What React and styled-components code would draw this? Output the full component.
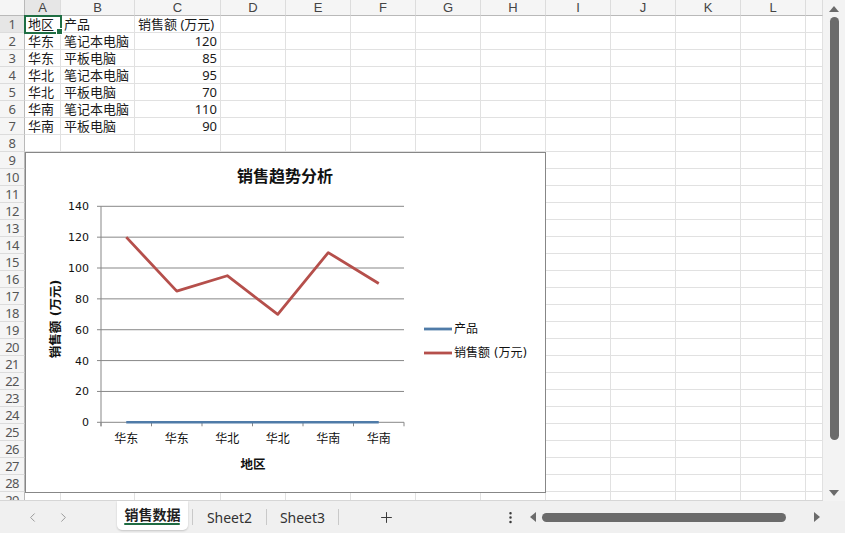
import React from "react";
import styled, { createGlobalStyle } from "styled-components";
import { ChevronLeft, ChevronRight, Plus, EllipsisVertical } from "lucide-react";

const Global = createGlobalStyle`
  html, body { margin: 0; padding: 0; background: #fff; }
  body { width: 845px; height: 533px; overflow: hidden; font-family: "Noto Sans", "Noto Sans CJK SC", sans-serif; }
`;

const COLS = ["A", "B", "C", "D", "E", "F", "G", "H", "I", "J", "K", "L", ""];
const DATA = [
  ["地区", "产品", "销售额 (万元)"],
  ["华东", "笔记本电脑", 120],
  ["华东", "平板电脑", 85],
  ["华北", "笔记本电脑", 95],
  ["华北", "平板电脑", 70],
  ["华南", "笔记本电脑", 110],
  ["华南", "平板电脑", 90],
];

const Page = styled.div`
  width: 845px;
  height: 533px;
  display: flex;
  flex-direction: column;
  background: #f3f3f3;
`;

const Top = styled.div`
  display: flex;
  height: 501px;
`;

const Sheet = styled.div`
  position: relative;
  width: 823px;
  height: 501px;
  overflow: hidden;
  background: #fff;
  border-bottom: 1px solid #d6d6d6;
  box-sizing: border-box;
`;

const Grid = styled.div`
  display: grid;
  grid-template-columns: 25px 36px 74px 86px repeat(9, 65px) 17px;
  grid-template-rows: 16px repeat(29, 17px);
`;

const ColHead = styled.div`
  box-sizing: border-box;
  background: ${(p) => (p.$active ? "#e6e6e6" : "#f5f5f5")};
  border-right: 1px solid #dcdcdc;
  border-bottom: 1px solid #b9b9b9;
  font-family: "Liberation Sans", sans-serif;
  font-size: 13px;
  line-height: 15px;
  color: #444;
  text-align: center;
`;

const Corner = styled(ColHead)`
  border-right: 1px solid #b9b9b9;
`;

const RowHead = styled.div`
  box-sizing: border-box;
  background: ${(p) => (p.$active ? "#e6e6e6" : "#f5f5f5")};
  border-right: 1px solid #b9b9b9;
  border-bottom: 1px solid #dcdcdc;
  font-family: "Noto Sans", sans-serif;
  font-size: 13px;
  line-height: 17px;
  color: #555;
  text-align: center;
  letter-spacing: -0.6px;
`;

const Cell = styled.div`
  position: relative;
  box-sizing: border-box;
  border-right: 1px solid #e1e1e1;
  border-bottom: 1px solid #e1e1e1;
  font-family: "Noto Sans", "Noto Sans CJK SC", sans-serif;
  font-size: 13px;
  line-height: 16px;
  color: #1a1a1a;
  padding: 0 3px;
  white-space: nowrap;
  text-align: ${(p) => (p.$num ? "right" : "left")};
  ${(p) =>
    p.$selected &&
    `
    outline: 2px solid #1f6e43;
    outline-offset: -1px;
    z-index: 1;
    &::after {
      content: "";
      position: absolute;
      right: -3px;
      bottom: -3px;
      width: 5px;
      height: 5px;
      background: #1f6e43;
      border: 1px solid #fff;
    }
  `}
`;

const ChartBox = styled.div`
  position: absolute;
  left: 25px;
  top: 152px;
  width: 521px;
  height: 341px;
  box-sizing: border-box;
  border: 1px solid #878787;
  background: #fff;
  z-index: 2;
`;

const VScroll = styled.div`
  width: 22px;
  height: 501px;
  position: relative;
  background: #f3f3f3;
  display: flex;
  flex-direction: column;
  align-items: center;
`;

const TriUp = styled.div`
  width: 0;
  height: 0;
  border-left: 5px solid transparent;
  border-right: 5px solid transparent;
  border-bottom: 6px solid #6b6b6b;
`;
const TriDown = styled.div`
  width: 0;
  height: 0;
  border-left: 5px solid transparent;
  border-right: 5px solid transparent;
  border-top: 6px solid #6b6b6b;
`;
const TriLeft = styled.div`
  width: 0;
  height: 0;
  border-top: 5px solid transparent;
  border-bottom: 5px solid transparent;
  border-right: 6px solid #6b6b6b;
`;
const TriRight = styled.div`
  width: 0;
  height: 0;
  border-top: 5px solid transparent;
  border-bottom: 5px solid transparent;
  border-left: 6px solid #6b6b6b;
`;

const VThumb = styled.div`
  width: 9px;
  height: 423px;
  border-radius: 5px;
  background: #6b6b6b;
  margin: 5px 0 0 1px;
`;

const VUp = styled.div`
  margin-top: 6px;
`;
const VDown = styled.div`
  margin-top: 50px;
`;

const TabBar = styled.div`
  height: 32px;
  display: flex;
  align-items: center;
  background: #f0f0f0;
`;

const Nav = styled.div`
  width: 117px;
  display: flex;
  align-items: center;
  padding-left: 20px;
  gap: 7px;
  box-sizing: border-box;
  color: #9a9a9a;
`;

const NavBtn = styled.div`
  width: 24px;
  display: flex;
  justify-content: center;
`;

const Tab = styled.div`
  position: relative;
  width: ${(p) => p.$w}px;
  height: ${(p) => (p.$active ? 29 : 28)}px;
  align-self: ${(p) => (p.$active ? "flex-start" : "center")};
  display: flex;
  align-items: center;
  justify-content: center;
  box-sizing: border-box;
  font-family: "Noto Sans", "Noto Sans CJK SC", sans-serif;
  font-size: 14px;
  font-weight: ${(p) => (p.$active ? 700 : 400)};
  color: ${(p) => (p.$active ? "#1f1f1f" : "#333")};
  background: ${(p) => (p.$active ? "#fff" : "transparent")};
  border-radius: ${(p) => (p.$active ? "0 0 5px 5px" : "0")};
  box-shadow: ${(p) => (p.$active ? "0 1px 2px rgba(0,0,0,0.18)" : "none")};
  padding-bottom: ${(p) => (p.$active ? 3 : 0)}px;
  ${(p) =>
    p.$active &&
    `
    &::after {
      content: "";
      position: absolute;
      left: 7px;
      right: 8px;
      bottom: 5px;
      height: 2px;
      background: #1e6b41;
      border-radius: 1px;
    }
  `}
`;

const Sep = styled.div`
  width: 1px;
  height: 16px;
  background: #c9c9c9;
  margin-left: ${(p) => p.$ml || 0}px;
`;

const IconBtn = styled.div`
  width: ${(p) => p.$w}px;
  margin-left: ${(p) => p.$ml || 0}px;
  display: flex;
  justify-content: center;
  align-items: center;
  color: #3a3a3a;
`;

const HScroll = styled.div`
  width: 298px;
  margin-left: 6px;
  display: flex;
  align-items: center;
  padding-left: 2px;
  box-sizing: border-box;
`;

const HThumb = styled.div`
  width: 244px;
  height: 9px;
  border-radius: 5px;
  background: #6b6b6b;
  margin-left: 6px;
`;

const HRight = styled.div`
  margin-left: 28px;
`;

/* ---------- chart ---------- */
const X0 = 101;
const X1 = 404;
const Y0 = 422.3;
const PX = 216 / 140;
const yOf = (v) => Y0 - v * PX;
const CAT_W = (X1 - X0) / 6;
const cats = ["华东", "华东", "华北", "华北", "华南", "华南"];
const vals = [120, 85, 95, 70, 110, 90];
const cx = (i) => X0 + CAT_W * (i + 0.5);

const CH_FONT = '"DejaVu Sans", "Noto Sans CJK SC", sans-serif';

function Chart() {
  const ticks = [0, 20, 40, 60, 80, 100, 120, 140];
  const redPts = vals.map((v, i) => `${cx(i)},${yOf(v)}`).join(" ");
  return (
    <ChartBox>
      <svg width="519" height="339" style={{ display: "block" }}>
        <g transform="translate(-26,-153)" fontFamily={CH_FONT}>
          <text x="285" y="182" textAnchor="middle" fontSize="16" fontWeight="700" fill="#111"
            fontFamily='"Noto Sans CJK SC", sans-serif'>
            销售趋势分析
          </text>
          {ticks.map((t) => (
            <g key={t}>
              <line x1={X0} x2={X1} y1={yOf(t)} y2={yOf(t)} stroke="#878787" strokeWidth="1" />
              <line x1={X0 - 4} x2={X0} y1={yOf(t)} y2={yOf(t)} stroke="#878787" strokeWidth="1" />
              <text x="89" y={yOf(t) + 4} textAnchor="end" fontSize="11" fill="#111">
                {t}
              </text>
            </g>
          ))}
          <line x1={X0} x2={X0} y1={yOf(140)} y2={Y0 + 4} stroke="#878787" strokeWidth="1" />
          {Array.from({ length: 7 }).map((_, i) => (
            <line key={i} x1={X0 + CAT_W * i} x2={X0 + CAT_W * i} y1={Y0} y2={Y0 + 4} stroke="#878787" strokeWidth="1" />
          ))}
          {cats.map((c, i) => (
            <text key={i} x={cx(i)} y="443" textAnchor="middle" fontSize="12" fill="#111">
              {c}
            </text>
          ))}
          <polyline points={`${cx(0)},${Y0} ${cx(5)},${Y0}`} fill="none" stroke="#4f7ba8" strokeWidth="2.5" />
          <polyline points={redPts} fill="none" stroke="#b54f4b" strokeWidth="2.8" strokeLinejoin="round" />
          <text x="253" y="469" textAnchor="middle" fontSize="12.5" fontWeight="700" fill="#111">
            地区
          </text>
          <text
            x="0"
            y="0"
            transform="translate(60,319) rotate(-90)"
            textAnchor="middle"
            fontSize="12.5"
            fontWeight="700"
            fill="#111"
          >
            销售额 (万元)
          </text>
          <line x1="424" x2="452" y1="329" y2="329" stroke="#4f7ba8" strokeWidth="2.8" />
          <text x="454" y="333" fontSize="12" fill="#111">产品</text>
          <line x1="424" x2="452" y1="353" y2="353" stroke="#b54f4b" strokeWidth="2.8" />
          <text x="454" y="357" fontSize="12" fill="#111">销售额 (万元)</text>
        </g>
      </svg>
    </ChartBox>
  );
}

export default function App() {
  const rows = Array.from({ length: 29 }, (_, i) => i + 1);
  return (
    <Page>
      <Global />
      <Top>
        <Sheet>
          <Grid>
            <Corner />
            {COLS.map((c, i) => (
              <ColHead key={i} $active={i === 0}>{c}</ColHead>
            ))}
            {rows.map((r) => (
              <React.Fragment key={r}>
                <RowHead $active={r === 1}>{r}</RowHead>
                {COLS.map((c, ci) => {
                  const v = DATA[r - 1] ? DATA[r - 1][ci] : undefined;
                  return (
                    <Cell key={ci} $num={typeof v === "number"} $selected={r === 1 && ci === 0}>
                      {v}
                    </Cell>
                  );
                })}
              </React.Fragment>
            ))}
          </Grid>
          <Chart />
        </Sheet>
        <VScroll>
          <VUp><TriUp /></VUp>
          <VThumb />
          <VDown><TriDown /></VDown>
        </VScroll>
      </Top>
      <TabBar>
        <Nav>
          <NavBtn><ChevronLeft size={15} strokeWidth={1.6} /></NavBtn>
          <NavBtn><ChevronRight size={15} strokeWidth={1.6} /></NavBtn>
        </Nav>
        <Tab $active $w={71}>销售数据</Tab>
        <Sep $ml={4} />
        <Tab $w={73}>Sheet2</Tab>
        <Sep />
        <Tab $w={71}>Sheet3</Tab>
        <Sep />
        <IconBtn $w={94}><Plus size={17} strokeWidth={1.4} /></IconBtn>
        <IconBtn $w={24} $ml={65}><EllipsisVertical size={15} strokeWidth={2} /></IconBtn>
        <HScroll>
          <TriLeft />
          <HThumb />
          <HRight><TriRight /></HRight>
        </HScroll>
      </TabBar>
    </Page>
  );
}
